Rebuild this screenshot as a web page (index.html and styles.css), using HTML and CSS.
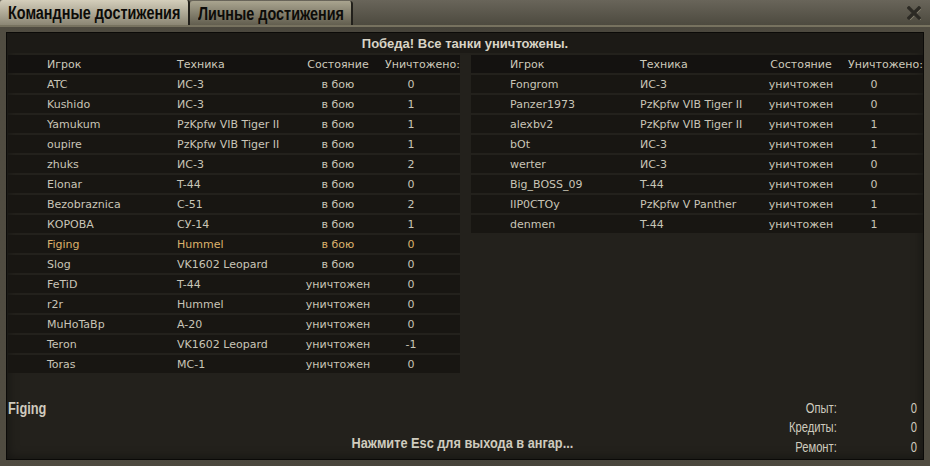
FILE: index.html
```html
<!DOCTYPE html>
<html>

<head>
    <meta charset="UTF-8">
    <title>Командные достижения</title>
    <link rel="stylesheet" href="styles.css">
</head>
<body>
    <div class="window">
        <div class="topbar">
            <div class="tab active"><span class="cond">Командные достижения</span></div>
            <div class="tab"><span class="cond">Личные достижения</span></div>
            <div class="close">
                <svg width="14" height="14" viewBox="0 0 14 14">
                    <path d="M2 2 L12 12 M12 2 L2 12" stroke="#8a8572" stroke-width="3.4" stroke-linecap="square" transform="translate(0.6 0.6)"/>
                    <path d="M2 2 L12 12 M12 2 L2 12" stroke="#2c2a24" stroke-width="3.4" stroke-linecap="square"/>
                </svg>
            </div>
        </div>
        <div class="frame">
            <div class="panel">
                <div class="result">Победа! Все танки уничтожены.</div>
                <div class="teams">
                    <div class="team">
                        <div class="row head"><span>Игрок</span><span>Техника</span><span>Состояние</span><span>Уничтожено:</span></div>
                        <div class="row"><span>ATC</span><span>ИС-3</span><span>в бою</span><span>0</span></div>
                        <div class="row"><span>Kushido</span><span>ИС-3</span><span>в бою</span><span>1</span></div>
                        <div class="row"><span>Yamukum</span><span>PzKpfw VIB Tiger II</span><span>в бою</span><span>1</span></div>
                        <div class="row"><span>oupire</span><span>PzKpfw VIB Tiger II</span><span>в бою</span><span>1</span></div>
                        <div class="row"><span>zhuks</span><span>ИС-3</span><span>в бою</span><span>2</span></div>
                        <div class="row"><span>Elonar</span><span>T-44</span><span>в бою</span><span>0</span></div>
                        <div class="row"><span>Bezobraznica</span><span>С-51</span><span>в бою</span><span>2</span></div>
                        <div class="row"><span>КОРОВА</span><span>СУ-14</span><span>в бою</span><span>1</span></div>
                        <div class="row me"><span>Figing</span><span>Hummel</span><span>в бою</span><span>0</span></div>
                        <div class="row"><span>Slog</span><span>VK1602 Leopard</span><span>в бою</span><span>0</span></div>
                        <div class="row"><span>FeTiD</span><span>T-44</span><span>уничтожен</span><span>0</span></div>
                        <div class="row"><span>r2r</span><span>Hummel</span><span>уничтожен</span><span>0</span></div>
                        <div class="row"><span>MuHoTaBp</span><span>A-20</span><span>уничтожен</span><span>0</span></div>
                        <div class="row"><span>Teron</span><span>VK1602 Leopard</span><span>уничтожен</span><span>-1</span></div>
                        <div class="row"><span>Toras</span><span>MC-1</span><span>уничтожен</span><span>0</span></div>
                    </div>
                    <div class="team">
                        <div class="row head"><span>Игрок</span><span>Техника</span><span>Состояние</span><span>Уничтожено:</span></div>
                        <div class="row"><span>Fongrom</span><span>ИС-3</span><span>уничтожен</span><span>0</span></div>
                        <div class="row"><span>Panzer1973</span><span>PzKpfw VIB Tiger II</span><span>уничтожен</span><span>0</span></div>
                        <div class="row"><span>alexbv2</span><span>PzKpfw VIB Tiger II</span><span>уничтожен</span><span>1</span></div>
                        <div class="row"><span>bOt</span><span>ИС-3</span><span>уничтожен</span><span>1</span></div>
                        <div class="row"><span>werter</span><span>ИС-3</span><span>уничтожен</span><span>0</span></div>
                        <div class="row"><span>Big_BOSS_09</span><span>T-44</span><span>уничтожен</span><span>0</span></div>
                        <div class="row"><span>IIP0CTOy</span><span>PzKpfw V Panther</span><span>уничтожен</span><span>1</span></div>
                        <div class="row"><span>denmen</span><span>T-44</span><span>уничтожен</span><span>1</span></div>
                    </div>
                </div>
                <div class="footer">
                    <div class="player"><span class="cond">Figing</span></div>
                    <div class="hint"><span class="cond">Нажмите Esc для выхода в ангар...</span></div>
                    <div class="stats">
                        <span class="label">Опыт:</span><span class="value">0</span>
                        <span class="label">Кредиты:</span><span class="value">0</span>
                        <span class="label">Ремонт:</span><span class="value">0</span>
                    </div>
                </div>
            </div>
        </div>
    </div>
</body>

</html>
```

FILE: styles.css
```css
        body {
            margin: 0;
            background: #3a372e;
            font-family: "DejaVu Sans", sans-serif;
        }

        .window {
            width: 930px;
            height: 466px;
            display: flex;
            flex-direction: column;
            background: #4b483d;
        }

        .cond {
            display: inline-block;
            transform: scaleX(0.8);
            transform-origin: left center;
            white-space: nowrap;
        }

        /* tabs bar */
        .topbar {
            height: 25px;
            display: flex;
            align-items: flex-end;
            background: linear-gradient(#69655a, #4d4a3f);
            border-bottom: 2px solid #77725f;
        }

        .tab {
            height: 24px;
            box-sizing: border-box;
            padding: 2px 0 0 8px;
            font-family: "Liberation Sans", Arial, sans-serif;
            font-weight: bold;
            font-size: 18px;
            line-height: 22px;
            color: #0c0b08;
            background: linear-gradient(#a9a48f, #625e4f);
            border-radius: 3px 3px 0 0;
            border-right: 2px solid #22201b;
            overflow: hidden;
        }

        .tab:nth-child(1) {
            width: 190px;
        }

        .tab:nth-child(2) {
            width: 163px;
        }

        .tab.active {
            height: 25px;
            background: linear-gradient(#d4cebb, #8b8674);
        }

        .close {
            margin-left: auto;
            margin-right: 9px;
            align-self: center;
            height: 15px;
        }

        /* frame around the content */
        .frame {
            flex: 1;
            padding: 5px 6px 6px 6px;
            background: linear-gradient(90deg, #504c41, #46433a 50%, #504c41);
            display: flex;
        }

        .panel {
            flex: 1;
            display: flex;
            flex-direction: column;
            background: #23211c;
            border: 1px solid #0b0a08;
            box-shadow: inset 0 0 12px rgba(0, 0, 0, 0.45);
        }

        .result {
            height: 20px;
            line-height: 21px;
            text-align: center;
            font-family: "Liberation Sans", Arial, sans-serif;
            font-weight: bold;
            font-size: 13px;
            color: #d8d4c6;
            background: #1c1a16;
        }

        .teams {
            display: flex;
            gap: 11px;
            margin: 2px 0 0 1px;
        }

        .team {
            flex: 1;
        }

        .row {
            display: grid;
            grid-template-columns: 130px 122px 78px 68px;
            padding-left: 39px;
            height: 18px;
            line-height: 20px;
            margin-bottom: 2px;
            font-size: 11px;
            color: #c9c5b7;
            background: #181612;
            white-space: nowrap;
            overflow: hidden;
        }

        .row span:nth-child(3),
        .row span:nth-child(4) {
            text-align: center;
        }

        .row.head {
            background: #141210;
            color: #cdc9bb;
            overflow: visible;
        }

        .row.head span:nth-child(4) {
            text-align: left;
            padding-left: 8px;
        }

        .row.me {
            color: #dcb26c;
        }

        /* footer */
        .footer {
            margin-top: auto;
            display: grid;
            grid-template-columns: 1fr auto 1fr;
            padding: 0 6px 2px 1px;
            font-family: "Liberation Sans", Arial, sans-serif;
            color: #cfcbbe;
        }

        .player {
            align-self: start;
            font-size: 16px;
            font-weight: bold;
            line-height: 20px;
        }

        .hint {
            align-self: end;
            font-size: 15px;
            font-weight: bold;
            line-height: 20px;
            margin-bottom: 4px;
        }

        .hint .cond {
            transform: scaleX(0.85);
            transform-origin: center;
        }

        .stats {
            justify-self: end;
            display: grid;
            grid-template-columns: auto 80px;
            font-size: 14px;
            line-height: 19.5px;
        }

        .label,
        .value {
            text-align: right;
            transform: scaleX(0.8);
            transform-origin: right center;
        }
```
